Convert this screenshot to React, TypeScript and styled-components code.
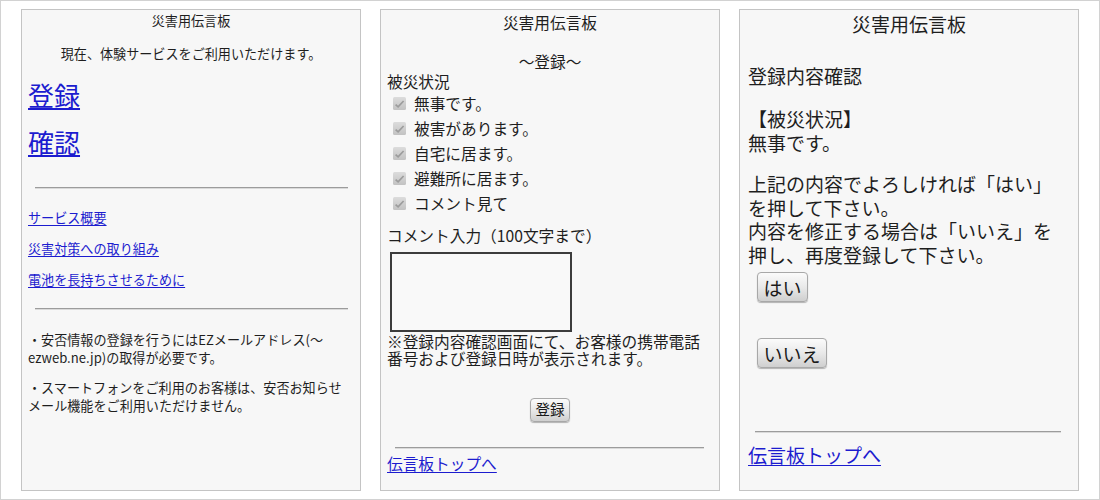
import React from 'react'
import styled, { createGlobalStyle } from 'styled-components'

const GlobalStyle = createGlobalStyle`
  html, body {
    margin: 0;
    padding: 0;
    background: #ffffff;
  }
  body {
    font-family: "Noto Sans CJK JP", "Noto Sans", sans-serif;
    color: #1e1e1e;
  }
`

const statusList = ['無事です。', '被害があります。', '自宅に居ます。', '避難所に居ます。', 'コメント見て']

const CheckMark: React.FC = () => (
  <svg width="13" height="13" viewBox="0 0 13 13">
    <defs>
      <linearGradient id="cbg" x1="0" y1="0" x2="0" y2="1">
        <stop offset="0" stopColor="#dcdcdc" />
        <stop offset="1" stopColor="#c2c2c2" />
      </linearGradient>
    </defs>
    <rect x="0" y="0" width="13" height="13" rx="1.5" fill="url(#cbg)" />
    <path d="M2.6 7.6 L5.1 9.8 L10.6 4" fill="none" stroke="#9c9c9c" strokeWidth="1.7" />
  </svg>
)

const App: React.FC = () => {
  return (
    <>
      <GlobalStyle />
      <Frame>
        {/* トップ画面 */}
        <Screen $fs={13.1} $lh={17} $pad="2px 6px 0">
          <Heading>災害用伝言板</Heading>
          <Heading $mt={16}>現在、体験サービスをご利用いただけます。</Heading>
          <BigLink href="#" $mt={9}>登録</BigLink>
          <BigLink href="#">確認</BigLink>
          <Rule $mt={22} $ml={7} $mr={6} />
          <SmallLink href="#" $mt={21}>サービス概要</SmallLink>
          <SmallLink href="#" $mt={14}>災害対策への取り組み</SmallLink>
          <SmallLink href="#" $mt={14}>電池を長持ちさせるために</SmallLink>
          <Rule $mt={20} $ml={7} $mr={6} />
          <Para $mt={22} $lh={17.5}>
            ・安否情報の登録を行うにはEZメールアドレス(～<br />
            ezweb.ne.jp)の取得が必要です。
          </Para>
          <Para $mt={13} $lh={17.5}>
            ・スマートフォンをご利用のお客様は、安否お知らせ<br />
            メール機能をご利用いただけません。
          </Para>
        </Screen>

        {/* 登録画面 */}
        <Screen $fs={15.7} $lh={19.5} $pad="3px 6px 0">
          <Heading>災害用伝言板</Heading>
          <Heading $mt={19.5}>～登録～</Heading>
          <Para>被災状況</Para>
          <CheckList>
            {statusList.map((s) => (
              <CheckRow key={s}>
                <CheckMark />
                <span>{s}</span>
              </CheckRow>
            ))}
          </CheckList>
          <Para $mt={10}>コメント入力（100文字まで）</Para>
          <Memo />
          <Para $mt={1} $lh={17}>
            ※登録内容確認画面にて、お客様の携帯電話<br />
            番号および登録日時が表示されます。
          </Para>
          <Center $mt={31}>
            <Btn $fs={14.5} $w={40} $h={24}>登録</Btn>
          </Center>
          <Rule $mt={25} $ml={8} $mr={9} />
          <SmallLink href="#" $mt={6}>伝言板トップへ</SmallLink>
        </Screen>

        {/* 確認画面 */}
        <Screen $fs={19} $lh={23.5} $pad="2px 8px 0">
          <Heading>災害用伝言板</Heading>
          <Para $mt={28}>登録内容確認</Para>
          <Para $mt={20}>
            【被災状況】<br />
            無事です。
          </Para>
          <Para $mt={18}>
            上記の内容でよろしければ「はい」<br />
            を押して下さい。<br />
            内容を修正する場合は「いいえ」を<br />
            押し、再度登録して下さい。
          </Para>
          <ButtonSlot $mt={6}>
            <Btn $fs={19} $w={51} $h={30}>はい</Btn>
          </ButtonSlot>
          <ButtonSlot $mt={36}>
            <Btn $fs={19} $w={70} $h={30}>いいえ</Btn>
          </ButtonSlot>
          <Rule $mt={63} $ml={7} $mr={9} />
          <SmallLink href="#" $mt={11}>伝言板トップへ</SmallLink>
        </Screen>
      </Frame>
    </>
  )
}

export default App

const Frame = styled.div`
  box-sizing: border-box;
  width: 1100px;
  height: 500px;
  border: 1px solid #d2d2d2;
  padding: 8px 20px;
  display: flex;
  gap: 19px;
  background: #ffffff;
`

const Screen = styled.section<{ $fs: number; $lh: number; $pad: string }>`
  box-sizing: border-box;
  width: 340px;
  height: 482px;
  border: 1px solid #c4c4c4;
  background: #f7f7f7;
  padding: ${(p) => p.$pad};
  display: flex;
  flex-direction: column;
  align-items: stretch;
  font-size: ${(p) => p.$fs}px;
  line-height: ${(p) => p.$lh}px;
  overflow: hidden;
`

const Heading = styled.div<{ $mt?: number }>`
  text-align: center;
  margin-top: ${(p) => p.$mt ?? 0}px;
  white-space: nowrap;
`

const Para = styled.div<{ $mt?: number; $lh?: number }>`
  margin-top: ${(p) => p.$mt ?? 0}px;
  ${(p) => (p.$lh ? `line-height: ${p.$lh}px;` : '')}
  white-space: nowrap;
`

const SmallLink = styled.a<{ $mt?: number }>`
  align-self: flex-start;
  color: #1c1ccf;
  text-decoration: underline;
  text-underline-offset: 2px;
  margin-top: ${(p) => p.$mt ?? 0}px;
`

const BigLink = styled(SmallLink)`
  font-size: 26px;
  line-height: 47px;
`

const Rule = styled.hr<{ $mt: number; $ml: number; $mr: number }>`
  border: 0;
  height: 1px;
  background: #9c9c9c;
  box-shadow: 0 1px 0 #dadada;
  margin: ${(p) => p.$mt}px ${(p) => p.$mr}px 0 ${(p) => p.$ml}px;
`

const CheckList = styled.div`
  display: flex;
  flex-direction: column;
`

const CheckRow = styled.div`
  display: flex;
  align-items: center;
  gap: 8px;
  height: 25px;
  padding-left: 6px;
`

const Memo = styled.textarea`
  box-sizing: border-box;
  width: 182px;
  height: 80px;
  margin: 6px 0 0 3px;
  border: 2px solid #3c3c3c;
  background: #f9f9f9;
  resize: none;
  outline: none;
  display: block;
`

const Center = styled.div<{ $mt: number }>`
  display: flex;
  justify-content: center;
  margin-top: ${(p) => p.$mt}px;
`

const ButtonSlot = styled.div<{ $mt: number }>`
  display: flex;
  margin-top: ${(p) => p.$mt}px;
  padding-left: 9px;
`

const Btn = styled.button<{ $fs: number; $w: number; $h: number }>`
  box-sizing: border-box;
  width: ${(p) => p.$w}px;
  height: ${(p) => p.$h}px;
  padding: 0;
  font-family: "Noto Sans CJK JP", "Noto Sans", sans-serif;
  font-size: ${(p) => p.$fs}px;
  line-height: 1;
  color: #1a1a1a;
  border: 1px solid #a8a8a8;
  border-radius: 4px;
  background: linear-gradient(#fbfbfb, #e9e9e9 50%, #cfcfcf);
  box-shadow: 0 1px 1px rgba(0, 0, 0, 0.28);
  display: flex;
  align-items: center;
  justify-content: center;
`
